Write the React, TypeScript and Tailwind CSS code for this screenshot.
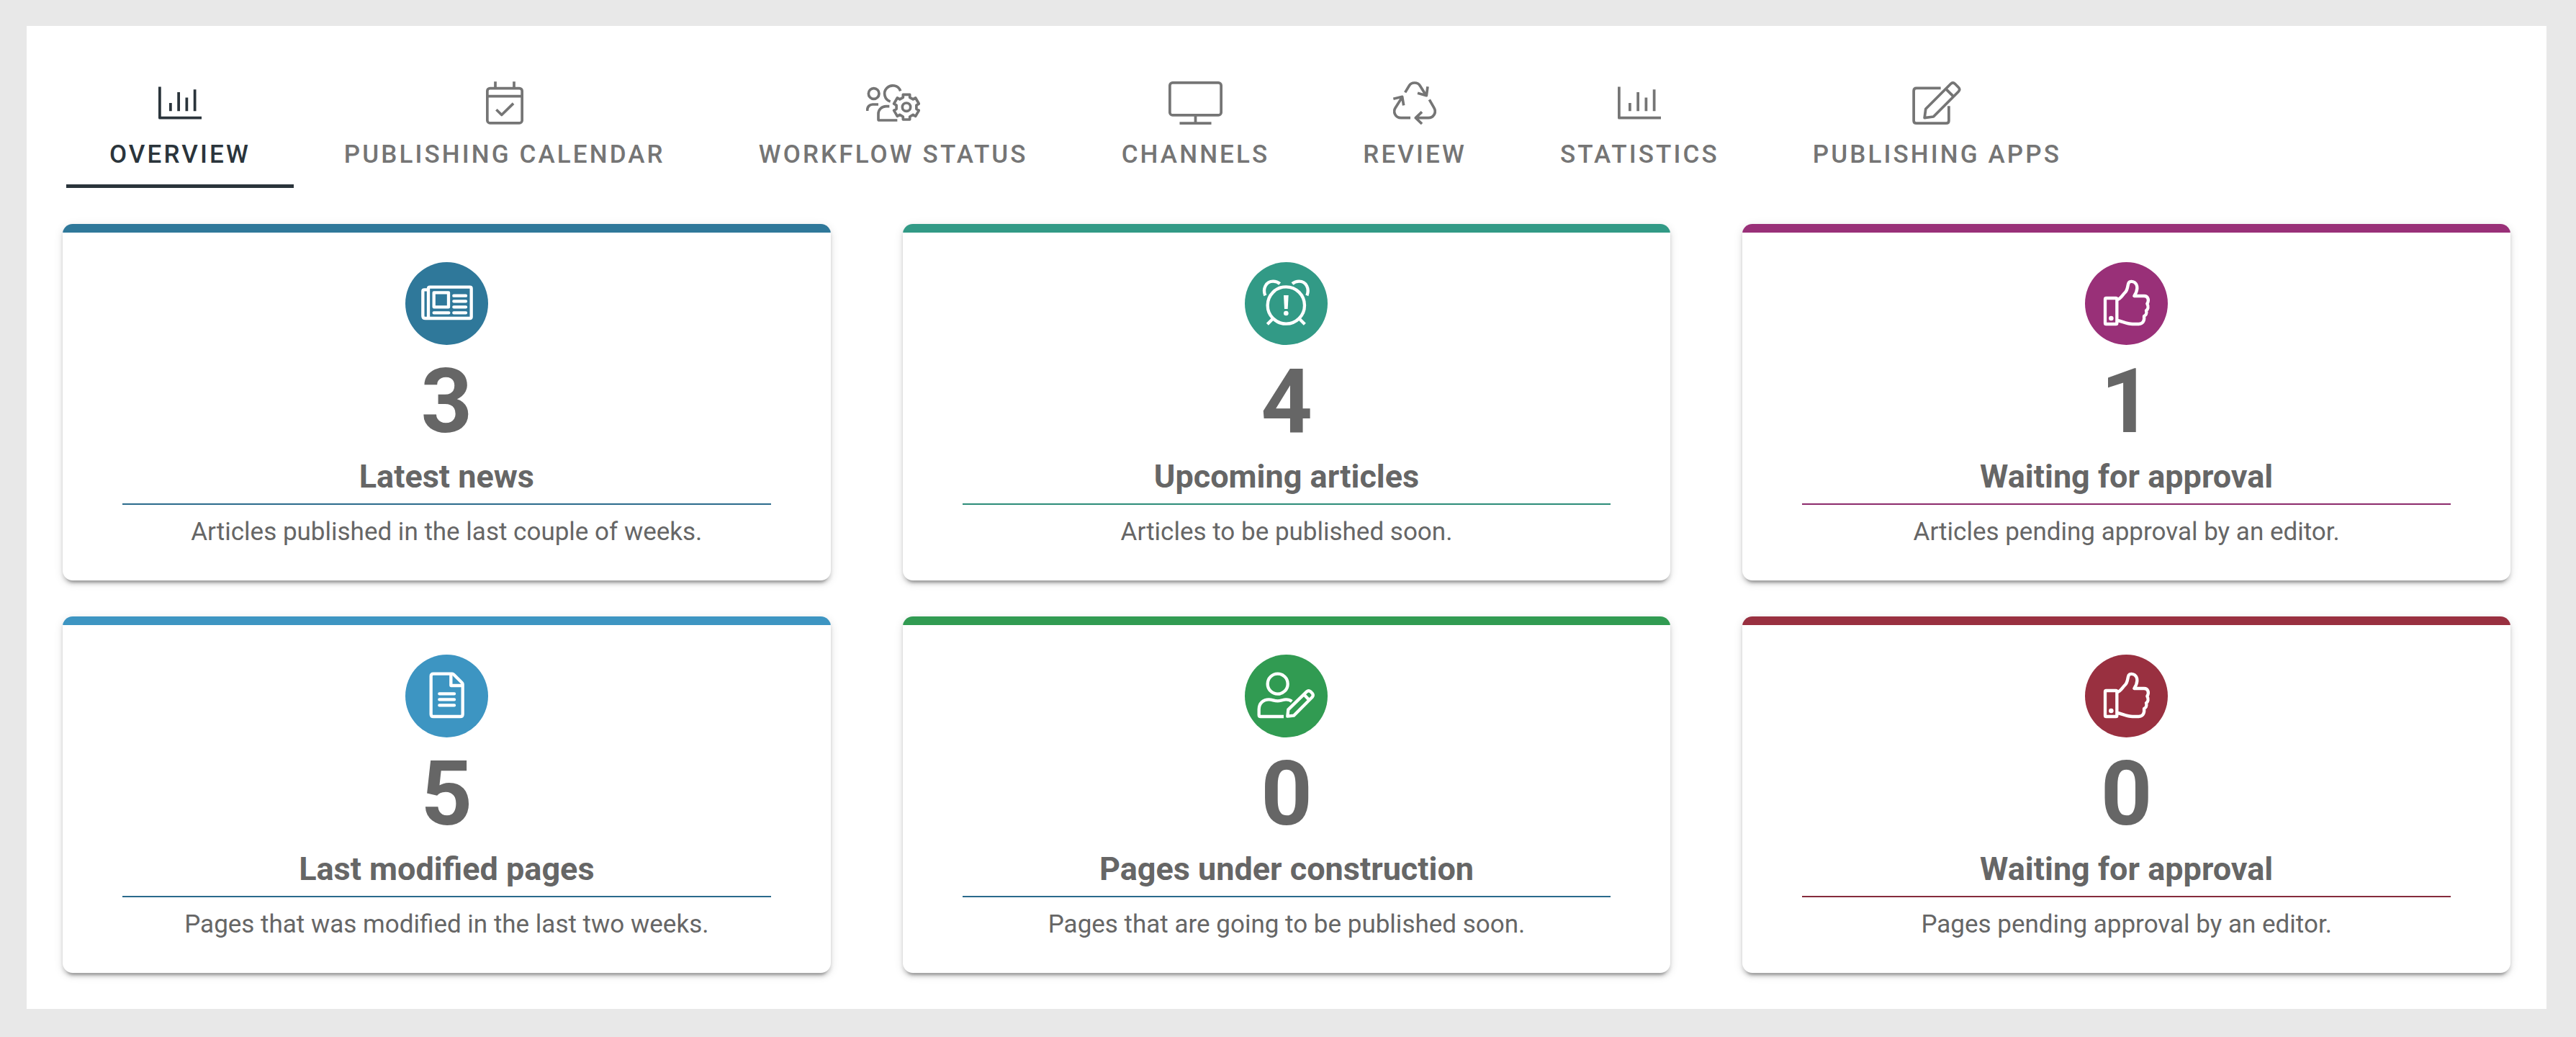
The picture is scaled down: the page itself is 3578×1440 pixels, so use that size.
import type { ReactNode } from "react";

const gearPoints = Array.from({ length: 6 }, (_, i) => {
  const a = (i * Math.PI) / 3;
  return [
    [-14, -40],
    [-14, -52],
    [14, -52],
    [14, -40],
  ]
    .map(([x, y]) => `${208 + x * Math.cos(a) - y * Math.sin(a)},${144 + x * Math.sin(a) + y * Math.cos(a)}`)
    .join(" ");
}).join(" ");

function TabIcon({ viewBox, width, stroke, children }: { viewBox: string; width: string; stroke: number; children: ReactNode }) {
  return (
    <svg
      viewBox={viewBox}
      className={`h-[60px] ${width}`}
      fill="none"
      stroke="currentColor"
      strokeWidth={stroke}
      strokeLinejoin="round"
      strokeLinecap="butt"
      aria-hidden="true"
    >
      {children}
    </svg>
  );
}

const ChartIcon = () => (
  <TabIcon viewBox="0 0 512 512" width="w-[60px]" stroke={32}>
    <path d="M16 64V432H512M144 256V352M240 128V352M336 192V352M432 96V352" />
  </TabIcon>
);

const CalendarIcon = () => (
  <TabIcon viewBox="0 0 448 512" width="w-[52px]" stroke={32}>
    <rect x="16" y="80" width="416" height="416" rx="32" />
    <path d="M16 176H432M112 0V72M336 0V72" />
    <path d="M124 336L188 398L328 262" />
  </TabIcon>
);

const WorkflowIcon = () => (
  <TabIcon viewBox="40 37 225 180" width="w-[75px]" stroke={11}>
    <circle cx="72" cy="88" r="22" />
    <path d="M183 77A34 34 0 1 0 141 121" />
    <path d="M45 160V156C45 142 55 133 67 133H91" />
    <path d="M170 199H94Q91 199 91 196V172C91 155 105 141 123 141H137" />
    <polygon points={gearPoints} />
    <circle cx="208" cy="144" r="17" />
  </TabIcon>
);

const MonitorIcon = () => (
  <TabIcon viewBox="0 0 640 512" width="w-[75px]" stroke={32}>
    <rect x="16" y="16" width="608" height="384" rx="32" />
    <path d="M320 400V496M132 496H508" />
  </TabIcon>
);

const RecycleIcon = () => (
  <TabIcon viewBox="45 37 180 180" width="w-[60px]" stroke={11}>
    <path d="M95 83L112 55C121 39 148 39 157 55L183 96M189 59L184 96L147 86" />
    <path d="M196 113L215 146C228 168 212 189 192 189H140M165 164L139 189L165 214" />
    <path d="M117 189H78C54 189 44 164 54 148L83 102M46 110L83 101L89 137" />
  </TabIcon>
);

const EditIcon = () => (
  <TabIcon viewBox="0 0 576 512" width="w-[68px]" stroke={32}>
    <path d="M336 80H48Q16 80 16 112V464Q16 496 48 496H400Q432 496 432 464V292" />
    <path d="M144 432L158 326L454 30Q480 4 506 30L546 70Q572 96 546 122L250 418ZM396 88L488 180" />
  </TabIcon>
);

function Badge({ viewBox, color, children }: { viewBox: string; color: string; children: ReactNode }) {
  return (
    <div className={`size-[115px] rounded-full ${color}`}>
      <svg viewBox={viewBox} className="size-full" fill="none" stroke="white" strokeWidth={13} strokeLinejoin="round" aria-hidden="true">
        {children}
      </svg>
    </div>
  );
}

const newspaper = (
  <>
    <path d="M165 306V182Q165 176 171 176H338Q344 176 344 182V300Q344 306 338 306H153Q142 306 142 296V193Q142 187 148 187H165" />
    <rect x="188" y="199" width="61" height="60" />
    <path d="M271 212H321M271 235H321M271 259H321M271 283H321M188 283H250" strokeLinecap="round" />
  </>
);

const alarm = (
  <>
    <circle cx="244" cy="252" r="77" />
    <path d="M157 211C146 184 159 152 190 152C201 152 210 155 218 162M331 211C342 184 329 152 298 152C287 152 278 155 270 162" />
    <path d="M190 307L166 331M298 307L322 331" />
    <path d="M234 210H254L251 267H237Z" fill="white" stroke="none" />
    <circle cx="244" cy="285" r="10" fill="white" stroke="none" />
  </>
);

const thumb = (
  <>
    <rect x="156" y="222" width="49" height="108" rx="4" />
    <circle cx="181" cy="306" r="10" fill="white" stroke="none" />
    <path d="M207 228C220 226 226 211 240 197C251 186 249 168 254 158C258 151 270 151 278 156C294 167 292 191 277 213H318C336 213 340 232 331 245C338 258 334 269 327 274C331 286 325 294 318 297C321 318 312 329 296 330H270C245 329 226 318 207 315" />
  </>
);

const doc = (
  <>
    <path d="M186 152H264Q268 152 271 155L305 189Q308 192 308 196V320Q308 330 298 330H186Q176 330 176 320V162Q176 152 186 152Z" />
    <path d="M259 153V201H307" />
    <path d="M211 235H273M211 259H273M211 283H273" strokeLinecap="round" />
  </>
);

const authorIcon = (
  <>
    <circle cx="209" cy="194" r="42" />
    <path d="M234 330H138Q131 330 131 323V300C131 274 150 259 172 259C188 259 192 265 209 265C226 265 230 259 244 259C254 259 262 262 268 267" />
    <path d="M250 329L253 301L330 226Q338 219 346 226L353 233Q360 241 353 249L276 326ZM318 238L341 262" />
  </>
);

const LEFT_VIEW = "69 72 345 345";
const VIEW = "72 72 345 345";

const tabs = [
  { label: "OVERVIEW", icon: <ChartIcon /> },
  { label: "PUBLISHING CALENDAR", icon: <CalendarIcon /> },
  { label: "WORKFLOW STATUS", icon: <WorkflowIcon /> },
  { label: "CHANNELS", icon: <MonitorIcon /> },
  { label: "REVIEW", icon: <RecycleIcon /> },
  { label: "STATISTICS", icon: <ChartIcon /> },
  { label: "PUBLISHING APPS", icon: <EditIcon /> },
];

const cards = [
  { count: 3, title: "Latest news", text: "Articles published in the last couple of weeks.", fill: "bg-[#2f789a]", line: "border-[#2a6a8c]", view: LEFT_VIEW, icon: newspaper },
  { count: 4, title: "Upcoming articles", text: "Articles to be published soon.", fill: "bg-[#329a86]", line: "border-[#2c8c78]", view: VIEW, icon: alarm },
  { count: 1, title: "Waiting for approval", text: "Articles pending approval by an editor.", fill: "bg-[#993078]", line: "border-[#8c2a6c]", view: VIEW, icon: thumb },
  { count: 5, title: "Last modified pages", text: "Pages that was modified in the last two weeks.", fill: "bg-[#3d95c2]", line: "border-[#2a6a8c]", view: LEFT_VIEW, icon: doc },
  { count: 0, title: "Pages under construction", text: "Pages that are going to be published soon.", fill: "bg-[#319b52]", line: "border-[#2a6a8c]", view: VIEW, icon: authorIcon },
  { count: 0, title: "Waiting for approval", text: "Pages pending approval by an editor.", fill: "bg-[#993040]", line: "border-[#852b3c]", view: VIEW, icon: thumb },
];

export default function App() {
  return (
    <div className="min-h-screen bg-[#e8e8e8] pt-9 pr-[41px] pb-[39px] pl-[37px] font-['Roboto',sans-serif] text-[#666666]">
      <main className="bg-white p-[50px]">
        <div role="tablist" aria-label="Publishing dashboard" className="flex gap-[10px] px-[5px]">
          {tabs.map((tab, i) => (
            <button
              key={tab.label}
              type="button"
              role="tab"
              aria-selected={i === 0}
              className={`flex flex-col items-center border-b-[5px] px-[60px] pt-[27px] pb-[21px] ${
                i === 0 ? "border-[#2a343b] text-[#2a343b]" : "border-transparent text-[#757575]"
              }`}
            >
              {tab.icon}
              <span className="mt-[21px] text-[35px] leading-[41px] font-medium tracking-[0.089em] whitespace-nowrap">{tab.label}</span>
            </button>
          ))}
        </div>

        <section className="mt-[50px] grid grid-cols-3 gap-x-[100px] gap-y-[50px]">
          {cards.map((card, i) => (
            <article
              key={i}
              className="overflow-hidden rounded-[14px] bg-white text-center shadow-[0_8px_3px_-5px_rgba(0,0,0,0.2),0_5px_5px_0_rgba(0,0,0,0.14),0_3px_13px_0_rgba(0,0,0,0.12)]"
            >
              <div className={`h-3 ${card.fill}`} />
              <div className="flex flex-col items-center px-[83px] pt-[41px] pb-[47px]">
                <Badge viewBox={card.view} color={card.fill}>
                  {card.icon}
                </Badge>
                <p className="mt-4 text-[125px] leading-[125px] font-bold">{card.count}</p>
                <h2 className={`mt-[14px] w-full border-b-2 pb-[10px] text-[45px] leading-[55px] font-bold ${card.line}`}>{card.title}</h2>
                <p className="mt-[18px] text-[35px] leading-10">{card.text}</p>
              </div>
            </article>
          ))}
        </section>
      </main>
    </div>
  );
}
